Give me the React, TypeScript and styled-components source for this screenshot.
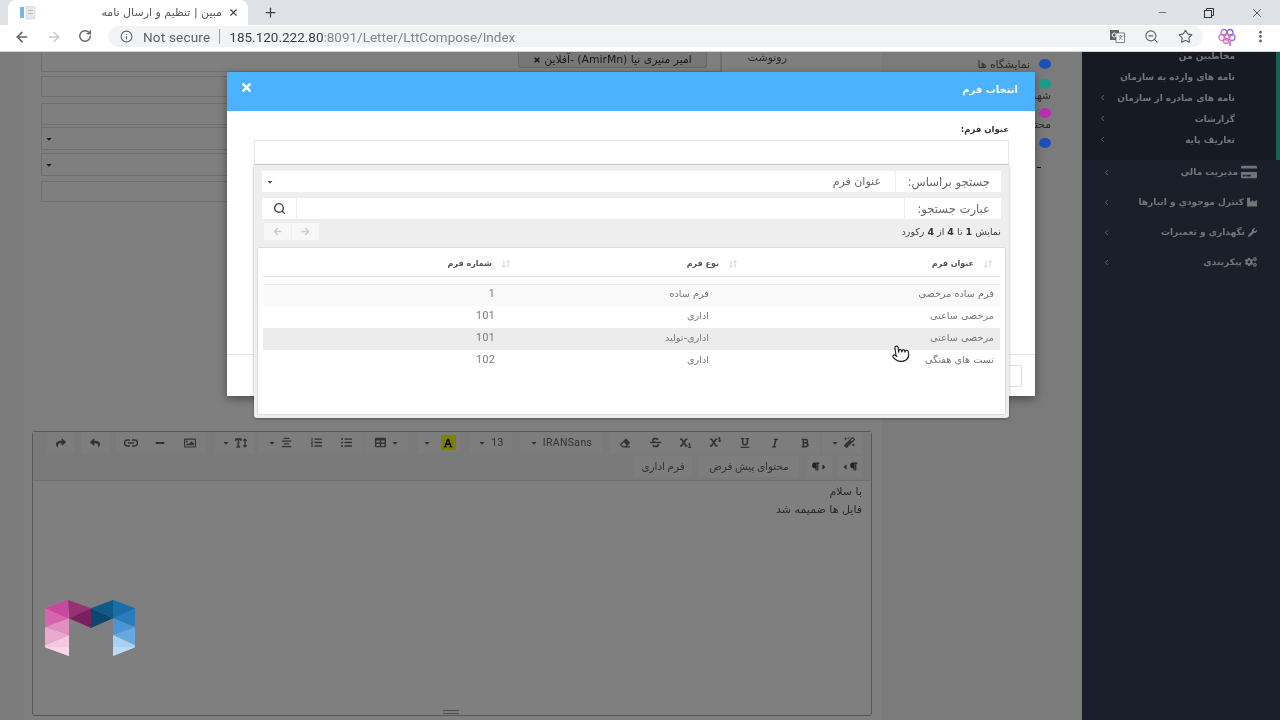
import React from 'react'
import styled, { createGlobalStyle } from 'styled-components'
import {
  ArrowDownUp,
  ArrowLeft,
  ArrowRight,
  ChevronLeft,
  EllipsisVertical,
  Info,
  Minus,
  Plus,
  Pointer,
  RotateCw,
  Search,
  Star,
  X,
  ZoomOut,
} from 'lucide-react'
import {
  FaAlignCenter,
  FaArrowLeft,
  FaArrowRight,
  FaBold,
  FaCaretDown,
  FaCaretLeft,
  FaCaretRight,
  FaCogs,
  FaCreditCard,
  FaEraser,
  FaFont,
  FaIndustry,
  FaItalic,
  FaListOl,
  FaListUl,
  FaMagic,
  FaMinus,
  FaParagraph,
  FaRegImage,
  FaReply,
  FaShare,
  FaStrikethrough,
  FaSubscript,
  FaSuperscript,
  FaTable,
  FaTextHeight,
  FaTimes,
  FaUnderline,
  FaWrench,
} from 'react-icons/fa'

const GlobalStyle = createGlobalStyle`
  html, body {
    margin: 0;
    padding: 0;
    height: 100%;
    overflow: hidden;
    background: #fff;
  }
  * {
    box-sizing: border-box;
  }
`

const fa = `'DejaVu Sans', sans-serif`

const Shell = styled.div`
  width: 1280px;
  height: 720px;
  display: flex;
  flex-direction: column;
  overflow: hidden;
  font-family: ${fa};
  filter: blur(0.35px);
`

/* browser chrome */
const TabStrip = styled.div`
  height: 25px;
  background: #dee1e6;
  display: flex;
  align-items: flex-end;
  padding-left: 8px;
  color: #3c4043;
`
const Tab = styled.div`
  width: 240px;
  height: 25px;
  background: #fff;
  border-radius: 8px 8px 0 0;
  display: flex;
  align-items: center;
  padding: 0 9px 0 12px;
`
const TabTitle = styled.div`
  flex: 1;
  direction: rtl;
  font-size: 11px;
  padding-right: 6px;
  color: #555;
  white-space: nowrap;
`
const NewTab = styled.div`
  margin-left: 15px;
  height: 25px;
  display: flex;
  align-items: center;
`
const WindowButtons = styled.div`
  margin-left: auto;
  height: 25px;
  display: flex;
  align-items: center;
  gap: 36px;
  padding-right: 16px;
`
const Toolbar = styled.div`
  height: 27px;
  background: #fff;
  display: flex;
  align-items: center;
  padding: 0 12px 3px 14px;
  border-bottom: 1px solid #d5d5d5;
  color: #5f6368;
`
const NavButtons = styled.div`
  width: 94px;
  display: flex;
  gap: 16px;
`
const Omnibox = styled.div`
  width: 1095px;
  height: 21px;
  border-radius: 11px;
  background: #f1f3f4;
  display: flex;
  align-items: center;
  padding: 0 10px 0 12px;
  font-family: Roboto, sans-serif;
  font-size: 13.5px;
`
const NotSecure = styled.span`
  margin-left: 10px;
  color: #5f6368;
  letter-spacing: 0.2px;
`
const Divider = styled.span`
  width: 1px;
  height: 15px;
  background: #9aa0a6;
  margin: 0 9px;
`
const UrlHost = styled.span`
  color: #3c4043;
`
const UrlPath = styled.span`
  color: #80868b;
`
const OmniIcons = styled.div`
  margin-left: auto;
  display: flex;
  align-items: center;
  gap: 19px;
`
const ToolbarEnd = styled.div`
  flex: 1;
  display: flex;
  align-items: center;
  justify-content: space-between;
  padding-left: 14px;
`

/* dimmed page */
const Page = styled.div`
  position: relative;
  flex: 1;
  display: flex;
  overflow: hidden;
  background: #f6f6f6;
`
const Backdrop = styled.div`
  position: absolute;
  inset: 0;
  background: rgba(0, 0, 0, 0.5);
`
const Content = styled.div`
  flex: 1;
  display: flex;
  padding-left: 24px;
`
const Panel = styled.div`
  width: 858px;
  background: #fff;
  display: flex;
  flex-direction: column;
  padding-left: 8px;
`
const FormArea = styled.div`
  height: 379px;
  padding-left: 9px;
  display: flex;
  flex-direction: column;
`
const FirstRow = styled.div`
  display: flex;
  height: 20px;
  margin-bottom: 4px;
`
const ChipField = styled.div`
  width: 680px;
  height: 20px;
  border: 1px solid #ddd;
  border-top: 0;
  display: flex;
  justify-content: flex-end;
  padding-right: 13px;
`
const Chip = styled.div`
  width: 189px;
  height: 16px;
  background: #eee;
  border: 1px solid #ccc;
  border-top: 0;
  border-radius: 0 0 3px 3px;
  direction: rtl;
  font-size: 10.8px;
  display: flex;
  align-items: center;
  justify-content: center;
  gap: 3px;
  color: #333;
  white-space: nowrap;
`
const FieldLabel = styled.div`
  flex: 1;
  border-left: 1px solid #ddd;
  direction: rtl;
  font-size: 11px;
  color: #555;
  padding: 0 95px 0 0;
  line-height: 11px;
`
const Field = styled.div<{ $h: number; $after: number }>`
  width: 680px;
  height: ${(p) => p.$h}px;
  margin-bottom: ${(p) => p.$after}px;
  border: 1px solid #ddd;
  display: flex;
  align-items: center;
  padding-left: 3px;
  font-size: 9px;
  color: #333;
`
const Editor = styled.div`
  width: 840px;
  height: 285px;
  border: 1px solid #b0b0b0;
  border-radius: 3px;
  display: flex;
  flex-direction: column;
  background: #fff;
  position: relative;
`
const EditorBar = styled.div`
  height: 49px;
  flex-shrink: 0;
  background: #f5f5f5;
  border-bottom: 1px solid #ddd;
  direction: rtl;
  padding: 0 9px 0 0;
`
const BarRow = styled.div`
  height: 21px;
  margin-bottom: 3px;
  display: flex;
  align-items: center;
`
const BarGroup = styled.div<{ $after?: number }>`
  display: flex;
  margin-left: ${(p) => p.$after ?? 6}px;
`
const BarButton = styled.div<{ $w?: number }>`
  width: ${(p) => p.$w ?? 30}px;
  height: 21px;
  background: #fafafa;
  display: flex;
  align-items: center;
  justify-content: center;
  gap: 5px;
  color: #666;
  font-size: 10.4px;
  font-family: Roboto, ${fa};
  letter-spacing: 0.4px;
  white-space: nowrap;
`
const ColorMark = styled.span`
  width: 15px;
  height: 15px;
  background: #ffff00;
  display: flex;
  align-items: center;
  justify-content: center;
  color: #222;
`
const ParagraphMark = styled.span`
  direction: ltr;
  display: flex;
  align-items: center;
  color: #444;
`
const EditorBody = styled.div`
  flex: 1;
  direction: rtl;
  padding: 2px 9px;
  font-size: 11px;
  line-height: 18px;
  color: #555;
`
const ResizeGrip = styled.div`
  position: absolute;
  left: 410px;
  bottom: 1px;
  width: 16px;
  height: 4px;
  border-top: 1px solid #999;
  border-bottom: 1px solid #999;
`
const LegendColumn = styled.div`
  flex: 1;
  background: #f7f7f7;
  padding: 6px 31px 0 0;
  display: flex;
  flex-direction: column;
  direction: rtl;
`
const LegendItem = styled.div<{ $h: number; $below?: boolean }>`
  height: ${(p) => p.$h}px;
  display: flex;
  flex-direction: ${(p) => (p.$below ? 'column' : 'row')};
  align-items: flex-start;
  gap: ${(p) => (p.$below ? 0 : 9)}px;
  font-size: 10.8px;
  line-height: 13px;
  color: #555;
  white-space: nowrap;
`
/* the dots stay saturated in the shot, so they sit above the backdrop */
const LegendDot = styled.span<{ $c: string }>`
  position: relative;
  z-index: 1;
  flex-shrink: 0;
  width: 12px;
  height: 10px;
  margin-top: 1px;
  border-radius: 50%;
  background: ${(p) => p.$c};
`
const LegendDash = styled.div`
  width: 4px;
  height: 1px;
  margin: 10px 10px 0 0;
  background: #000;
`

/* sidebar */
const Sidebar = styled.div`
  width: 198px;
  background: #343f54;
  color: #e4e8f0;
  direction: rtl;
  font-size: 9px;
`
const SubMenu = styled.div`
  height: 108px;
  overflow: hidden;
  background: #2c3646;
  border-right: 4px solid #34bea9;
  padding: 0 41px 0 0;
`
const SubList = styled.div`
  margin-top: -7px;
`
const SubItem = styled.div`
  height: 21px;
  display: flex;
  align-items: center;
  justify-content: space-between;
  font-weight: 700;
  padding-left: 16px;
  white-space: nowrap;
`
const Section = styled.div`
  height: 30px;
  display: flex;
  align-items: center;
  justify-content: space-between;
  padding: 0 23px 6px 20px;
  font-weight: 700;
  white-space: nowrap;
`
const SectionLabel = styled.div`
  display: flex;
  align-items: center;
  gap: 3px;
`

/* modal */
const Modal = styled.div`
  position: absolute;
  left: 227px;
  top: 20px;
  width: 808px;
  height: 324px;
  background: #fff;
  direction: rtl;
  display: flex;
  flex-direction: column;
  box-shadow: 0 3px 9px rgba(0, 0, 0, 0.4);
`
const ModalHeader = styled.div`
  height: 39px;
  flex-shrink: 0;
  background: #4ab2ff;
  color: #fff;
  display: flex;
  align-items: flex-start;
  justify-content: space-between;
  padding: 7px 17px 0 13px;
  svg {
    margin-top: 2px;
  }
`
const ModalTitle = styled.div`
  font-weight: 700;
  font-size: 10px;
  line-height: 22px;
`
const ModalBody = styled.div`
  flex: 1;
  padding: 12px 26px 0 27px;
`
const FormLabel = styled.div`
  font-size: 8.5px;
  font-weight: 700;
  color: #333;
  line-height: 13px;
  margin-bottom: 4px;
`
const TitleInput = styled.div`
  height: 25px;
  border: 1px solid #e8e8e8;
  border-bottom-color: #ccc;
`
const DropdownAnchor = styled.div`
  position: relative;
`
const Dropdown = styled.div`
  position: absolute;
  top: 0;
  left: 0;
  right: 0;
  z-index: 2;
  height: 253px;
  background: #eee;
  border-radius: 0 0 3px 3px;
  box-shadow: 0 1px 3px rgba(0, 0, 0, 0.35);
  padding: 6px 8px 0 8px;
  display: flex;
  flex-direction: column;
  font-size: 10px;
  color: #666;
`
const SearchRow = styled.div`
  height: 21px;
  margin-bottom: 6px;
  background: #fff;
  display: flex;
  align-items: center;
  font-size: 11.6px;
`
const RowLabel = styled.div<{ $w: number }>`
  width: ${(p) => p.$w}px;
  height: 100%;
  border-left: 1px solid #eee;
  padding-right: 11px;
  display: flex;
  align-items: center;
  white-space: nowrap;
`
const RowValue = styled.div`
  flex: 1;
  padding-right: 14px;
  font-size: 11px;
`
const SearchButton = styled.div`
  width: 35px;
  height: 100%;
  border-right: 1px solid #eee;
  display: flex;
  align-items: center;
  justify-content: center;
  color: #444;
`
const Caret = styled.div`
  width: 14px;
  margin-left: 1px;
  display: flex;
  justify-content: center;
  color: #555;
`
const InfoRow = styled.div`
  height: 22px;
  margin-top: -5px;
  display: flex;
  align-items: center;
  justify-content: space-between;
  font-size: 9.5px;
  color: #444;
  white-space: nowrap;
  b {
    color: #333;
  }
`
const Pager = styled.div`
  display: flex;
  gap: 1px;
  direction: ltr;
  margin-left: 2px;
`
const PagerButton = styled.div`
  width: 27px;
  height: 17px;
  background: #f7f7f7;
  color: #ccc;
  display: flex;
  align-items: center;
  justify-content: center;
`
const TableCard = styled.div`
  width: 749px;
  height: 168px;
  margin: 5px -5px 0 0;
  background: #fff;
  border: 1px solid #ddd;
  border-radius: 2px;
  padding: 0 5px;
`
const HeadRow = styled.div`
  height: 29px;
  padding-top: 3px;
  display: grid;
  grid-template-columns: 255px 227px 1fr;
  align-items: center;
  border-bottom: 1px solid #ddd;
  margin-bottom: 7px;
  font-weight: 700;
  font-size: 8px;
  color: #555;
`
const HeadCell = styled.div`
  display: flex;
  align-items: center;
  gap: 9px;
  padding-right: 7px;
  svg {
    color: #ccc;
  }
`
const BodyRow = styled.div<{ $bg: string; $top?: boolean }>`
  height: 22px;
  display: grid;
  grid-template-columns: 285px 214px 1fr;
  align-items: center;
  background: ${(p) => p.$bg};
  border-top: ${(p) => (p.$top ? '1px solid #e8e8e8' : '0')};
  font-size: 9.7px;
  color: #777;
`
const BodyCell = styled.div`
  padding: 0 6px 4px 0;
`
const NumberCell = styled(BodyCell)`
  font-family: Roboto, ${fa};
  font-size: 10.5px;
  letter-spacing: 0.4px;
`
const ModalFooter = styled.div`
  height: 42px;
  flex-shrink: 0;
  border-top: 1px solid #e5e5e5;
  padding: 10px 13px 0 0;
`
const FooterButton = styled.div`
  width: 60px;
  height: 22px;
  border: 1px solid #ddd;
  border-radius: 2px;
`
const HandCursor = styled.div`
  position: absolute;
  left: 891px;
  top: 292px;
  z-index: 5;
  transform: rotate(-8deg);
  line-height: 0;
`
const Watermark = styled.svg`
  position: absolute;
  left: 45px;
  top: 548px;
  z-index: 4;
`

const rows = [
  { title: 'فرم ساده مرخصی', type: 'فرم ساده', no: '1', bg: '#f9f9f9', top: true },
  { title: 'مرخصی ساعتی', type: 'اداری', no: '101', bg: '#fff' },
  { title: 'مرخصی ساعتی', type: 'اداری-تولید', no: '101', bg: '#ececec' },
  { title: 'تست های هفتگی', type: 'اداری', no: '102', bg: '#fff' },
]

const subItems = [
  { label: 'مخاطبین من' },
  { label: 'نامه های وارده به سازمان' },
  { label: 'نامه های صادره از سازمان', more: true },
  { label: 'گزارشات', more: true },
  { label: 'تعاریف پایه', more: true },
]

const sections = [
  { label: 'مدیریت مالی', icon: <FaCreditCard size={16} /> },
  { label: 'کنترل موجودي و انبارها', icon: <FaIndustry size={10} /> },
  { label: 'نگهداری و تعمیرات', icon: <FaWrench size={9} /> },
  { label: 'پیکربندی', icon: <FaCogs size={12} /> },
]

const caret = <FaCaretDown size={8} />
const sortIcon = <ArrowDownUp size={10} strokeWidth={2} />

export default function App() {
  return (
    <Shell>
      <GlobalStyle />
      <TabStrip>
        <Tab>
          <svg width="16" height="14" viewBox="0 0 16 14">
            <rect x="0" y="1" width="4" height="11" fill="#7fb2de" />
            <rect x="6" y="0" width="9" height="13" fill="#e6e9ee" stroke="#c9ced6" strokeWidth="0.6" />
            <rect x="8" y="4" width="5" height="1" fill="#b7bdc7" />
            <rect x="8" y="7" width="5" height="1" fill="#b7bdc7" />
          </svg>
          <TabTitle>مبین | تنظیم و ارسال نامه</TabTitle>
          <X size={11} strokeWidth={2.4} />
        </Tab>
        <NewTab>
          <Plus size={15} strokeWidth={2} />
        </NewTab>
        <WindowButtons>
          <Minus size={11} strokeWidth={1.5} />
          <svg width="10" height="10" viewBox="0 0 10 10" fill="none" stroke="#333" strokeWidth="1">
            <rect x="0.5" y="2.5" width="7" height="7" />
            <path d="M2.5 2.5V0.5H9.5V7.5H7.5" />
          </svg>
          <X size={14} strokeWidth={1.4} />
        </WindowButtons>
      </TabStrip>
      <Toolbar>
        <NavButtons>
          <ArrowLeft size={16} strokeWidth={2.4} />
          <ArrowRight size={16} strokeWidth={2} color="#c4c7cc" />
          <RotateCw size={14} strokeWidth={2.4} />
        </NavButtons>
        <Omnibox>
          <Info size={13} strokeWidth={2} />
          <NotSecure>Not secure</NotSecure>
          <Divider />
          <UrlHost>185.120.222.80</UrlHost>
          <UrlPath>:8091/Letter/LttCompose/Index</UrlPath>
          <OmniIcons>
            <svg width="15" height="13" viewBox="0 0 15 13">
              <rect x="0" y="0" width="9" height="10" fill="#5f6368" />
              <rect x="6" y="3" width="8.5" height="9.5" fill="#fff" stroke="#5f6368" strokeWidth="0.8" />
              <path d="M8 6h5M10.5 5v1M9 10l3-4M9.5 7l3 3" stroke="#5f6368" strokeWidth="0.7" fill="none" />
              <circle cx="4.2" cy="5" r="2" fill="none" stroke="#fff" strokeWidth="0.9" />
            </svg>
            <ZoomOut size={15} strokeWidth={1.8} />
            <Star size={15} strokeWidth={1.8} />
          </OmniIcons>
        </Omnibox>
        <ToolbarEnd>
          <svg width="20" height="20" viewBox="0 0 20 20">
            <g fill="none" strokeWidth="1.3">
              <circle cx="7" cy="5.5" r="3" stroke="#a46fd8" />
              <circle cx="13" cy="5.5" r="3" stroke="#8a5fd0" />
              <circle cx="5" cy="10.5" r="3" stroke="#e070c4" />
              <circle cx="15" cy="10.5" r="3" stroke="#a46fd8" />
              <circle cx="10" cy="10" r="3" stroke="#d66ec6" />
              <circle cx="9" cy="14" r="2.5" stroke="#e070c4" />
            </g>
            <rect x="12" y="14" width="2" height="5" fill="#c58ae0" />
          </svg>
          <EllipsisVertical size={15} strokeWidth={2.6} />
        </ToolbarEnd>
      </Toolbar>
      <Page>
        <Content>
          <Panel>
            <FormArea>
              <FirstRow>
                <ChipField>
                  <Chip>
                    امیر منیری نیا (AmirMn) -آفلاین
                    <FaTimes size={8} />
                  </Chip>
                </ChipField>
                <FieldLabel>رونوشت</FieldLabel>
              </FirstRow>
              <Field $h={21} $after={6} />
              <Field $h={22} $after={2} />
              <Field $h={23} $after={3}>{caret}</Field>
              <Field $h={23} $after={5}>{caret}</Field>
              <Field $h={21} $after={0} />
            </FormArea>
            <Editor>
              <EditorBar>
                <BarRow>
                  <BarGroup $after={3}>
                    <BarButton $w={39}>
                      <FaMagic size={11} />
                      {caret}
                    </BarButton>
                  </BarGroup>
                  <BarGroup $after={8}>
                    <BarButton><FaBold size={10} /></BarButton>
                    <BarButton><FaItalic size={10} /></BarButton>
                    <BarButton><FaUnderline size={10} /></BarButton>
                    <BarButton><FaSuperscript size={11} /></BarButton>
                    <BarButton><FaSubscript size={11} /></BarButton>
                    <BarButton><FaStrikethrough size={11} /></BarButton>
                    <BarButton><FaEraser size={10} /></BarButton>
                  </BarGroup>
                  <BarGroup $after={8}>
                    <BarButton $w={82}>IRANSans{caret}</BarButton>
                  </BarGroup>
                  <BarGroup $after={10}>
                    <BarButton $w={42}>13{caret}</BarButton>
                  </BarGroup>
                  <BarGroup $after={10}>
                    <BarButton $w={24}><ColorMark><FaFont size={10} /></ColorMark></BarButton>
                    <BarButton $w={18}>{caret}</BarButton>
                  </BarGroup>
                  <BarGroup $after={5}>
                    <BarButton $w={42}>{caret}<FaTable size={11} /></BarButton>
                  </BarGroup>
                  <BarGroup $after={5}>
                    <BarButton><FaListUl size={11} /></BarButton>
                    <BarButton><FaListOl size={11} /></BarButton>
                    <BarButton $w={42}><FaAlignCenter size={11} />{caret}</BarButton>
                  </BarGroup>
                  <BarGroup $after={10}>
                    <BarButton $w={39}>
                      <FaTextHeight size={12} />
                      {caret}
                    </BarButton>
                  </BarGroup>
                  <BarGroup $after={7}>
                    <BarButton><FaRegImage size={12} /></BarButton>
                    <BarButton><FaMinus size={10} /></BarButton>
                    <BarButton $w={29}>
                      <svg width="14" height="8" viewBox="0 0 14 8" fill="none" stroke="currentColor" strokeWidth="1.5">
                        <path d="M6 1H3.5a3 3 0 0 0 0 6H6M8 1h2.5a3 3 0 0 1 0 6H8M4 4h6" />
                      </svg>
                    </BarButton>
                  </BarGroup>
                  <BarGroup $after={6}>
                    <BarButton $w={28}><FaReply size={10} /></BarButton>
                  </BarGroup>
                  <BarGroup>
                    <BarButton $w={28}><FaShare size={10} /></BarButton>
                  </BarGroup>
                </BarRow>
                <BarRow>
                  <BarGroup $after={5}>
                    <BarButton $w={25}>
                      <ParagraphMark><FaCaretLeft size={8} /><FaParagraph size={9} /></ParagraphMark>
                    </BarButton>
                  </BarGroup>
                  <BarGroup $after={8}>
                    <BarButton $w={25}>
                      <ParagraphMark><FaParagraph size={9} /><FaCaretRight size={8} /></ParagraphMark>
                    </BarButton>
                  </BarGroup>
                  <BarGroup $after={7}>
                    <BarButton $w={100}>محتوای پیش فرض</BarButton>
                  </BarGroup>
                  <BarGroup>
                    <BarButton $w={58}>فرم اداری</BarButton>
                  </BarGroup>
                </BarRow>
              </EditorBar>
              <EditorBody>
                با سلام
                <br />
                فایل ها ضمیمه شد
              </EditorBody>
              <ResizeGrip />
            </Editor>
          </Panel>
          <LegendColumn>
            <LegendItem $h={20}><LegendDot $c="#1d4fb4" />نمایشگاه ها</LegendItem>
            <LegendItem $h={29} $below><LegendDot $c="#169c8a" />شهرها</LegendItem>
            <LegendItem $h={30} $below><LegendDot $c="#bb2fae" />محتوا</LegendItem>
            <LegendItem $h={20}><LegendDot $c="#1d4fb4" /></LegendItem>
            <LegendDash />
          </LegendColumn>
        </Content>
        <Sidebar>
          <SubMenu>
            <SubList>
              {subItems.map((item) => (
                <SubItem key={item.label}>
                  {item.label}
                  {item.more && <ChevronLeft size={9} strokeWidth={2} />}
                </SubItem>
              ))}
            </SubList>
          </SubMenu>
          {sections.map((section) => (
            <Section key={section.label}>
              <SectionLabel>
                {section.icon}
                {section.label}
              </SectionLabel>
              <ChevronLeft size={9} strokeWidth={2} />
            </Section>
          ))}
        </Sidebar>
        <Backdrop />
        <Modal>
          <ModalHeader>
            <ModalTitle>انتخاب فرم</ModalTitle>
            <FaTimes size={13} />
          </ModalHeader>
          <ModalBody>
            <FormLabel>عنوان فرم:</FormLabel>
            <TitleInput />
            <DropdownAnchor>
              <Dropdown>
                <SearchRow>
                  <RowLabel $w={106}>جستجو براساس:</RowLabel>
                  <RowValue>عنوان فرم</RowValue>
                  <Caret>{caret}</Caret>
                </SearchRow>
                <SearchRow>
                  <RowLabel $w={97}>عبارت جستجو:</RowLabel>
                  <RowValue />
                  <SearchButton>
                    <Search size={13} strokeWidth={2.6} />
                  </SearchButton>
                </SearchRow>
                <InfoRow>
                  <span>
                    نمایش <b>1</b> تا <b>4</b> از <b>4</b> رکورد
                  </span>
                  <Pager>
                    <PagerButton><FaArrowLeft size={9} /></PagerButton>
                    <PagerButton><FaArrowRight size={9} /></PagerButton>
                  </Pager>
                </InfoRow>
                <TableCard>
                  <HeadRow>
                    <HeadCell>{sortIcon}عنوان فرم</HeadCell>
                    <HeadCell>{sortIcon}نوع فرم</HeadCell>
                    <HeadCell>{sortIcon}شماره فرم</HeadCell>
                  </HeadRow>
                  {rows.map((row, i) => (
                    <BodyRow key={i} $bg={row.bg} $top={row.top}>
                      <BodyCell>{row.title}</BodyCell>
                      <BodyCell>{row.type}</BodyCell>
                      <NumberCell>{row.no}</NumberCell>
                    </BodyRow>
                  ))}
                </TableCard>
              </Dropdown>
            </DropdownAnchor>
          </ModalBody>
          <ModalFooter>
            <FooterButton />
          </ModalFooter>
        </Modal>
        <HandCursor>
          <Pointer size={19} fill="#fff" color="#222" strokeWidth={1.5} />
        </HandCursor>
        <Watermark width="90" height="56" viewBox="0 0 90 56">
          <polygon points="0,8.3 23,0 24,18.3 0,27" fill="#d566ad" />
          <polygon points="0,8.3 23,0 23,18.3" fill="#c9479c" />
          <polygon points="0,27 24,18.3 24,35" fill="#e28fc0" />
          <polygon points="0,27 24,35 0,45" fill="#eca9cf" />
          <polygon points="0,45 24,35 24,56 0,47.3" fill="#f4c8de" />
          <polygon points="0,47.3 24,47 24,56" fill="#f8d5e7" />
          <polygon points="23,0 46,8.3 24,18.3" fill="#973271" />
          <polygon points="24,18.3 46,8.3 46,28" fill="#7a2060" />
          <polygon points="68,0 46,8.3 68,18.3" fill="#0f5a88" />
          <polygon points="68,18.3 46,8.3 46,28" fill="#0b4870" />
          <polygon points="90,8.3 68,0 68,18.3 90,27" fill="#2a7cba" />
          <polygon points="90,8.3 68,0 68,18.3" fill="#1a6ea8" />
          <polygon points="90,27 68,18.3 68,35" fill="#4a96d6" />
          <polygon points="90,27 68,35 90,45" fill="#68a8e0" />
          <polygon points="90,45 68,35 68,56 90,47.3" fill="#a8d0f2" />
          <polygon points="90,47.3 68,47 68,56" fill="#bcdcf6" />
        </Watermark>
      </Page>
    </Shell>
  )
}
